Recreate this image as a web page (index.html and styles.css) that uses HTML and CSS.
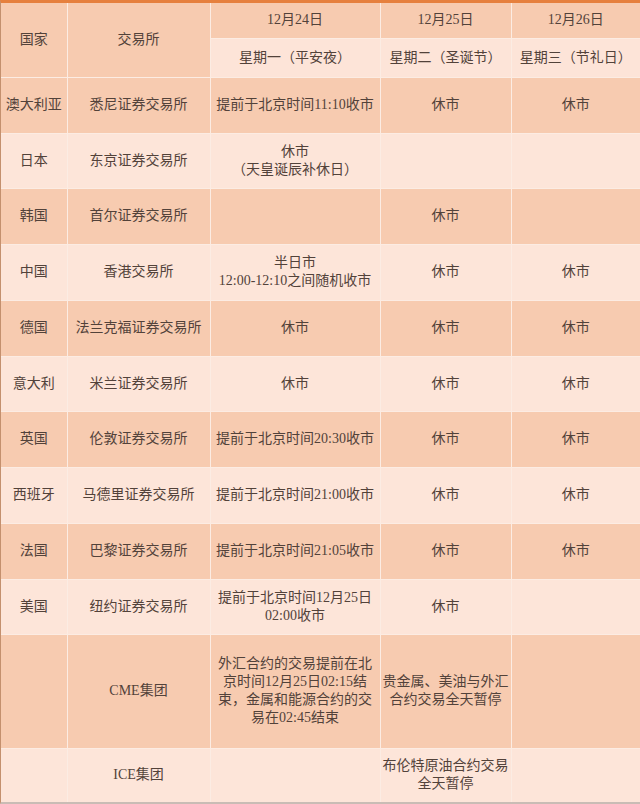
FILE: index.html
```html
<!DOCTYPE html>
<html lang="zh">
<head>
<meta charset="utf-8">
<link rel="stylesheet" href="styles.css">
</head>
<body>
<div class="frame">
<table class="holidays">
  <colgroup>
    <col class="c1"><col class="c2"><col class="c3"><col class="c4"><col class="c5">
  </colgroup>
  <tr class="h1">
    <td rowspan="2" class="dark">国家</td>
    <td rowspan="2" class="dark">交易所</td>
    <td class="dark">12月24日</td>
    <td class="dark">12月25日</td>
    <td class="dark">12月26日</td>
  </tr>
  <tr class="h2">
    <td>星期一（平安夜）</td>
    <td>星期二（圣诞节）</td>
    <td>星期三（节礼日）</td>
  </tr>
  <tr class="r dark r56">
    <td>澳大利亚</td><td>悉尼证券交易所</td><td>提前于北京时间11:10收市</td><td>休市</td><td>休市</td>
  </tr>
  <tr class="r light r55">
    <td>日本</td><td>东京证券交易所</td><td>休市<br>（天皇诞辰补休日）</td><td></td><td></td>
  </tr>
  <tr class="r dark r56">
    <td>韩国</td><td>首尔证券交易所</td><td></td><td>休市</td><td></td>
  </tr>
  <tr class="r light r56">
    <td>中国</td><td>香港交易所</td><td>半日市<br>12:00-12:10之间随机收市</td><td>休市</td><td>休市</td>
  </tr>
  <tr class="r dark r56">
    <td>德国</td><td>法兰克福证券交易所</td><td>休市</td><td>休市</td><td>休市</td>
  </tr>
  <tr class="r light r55">
    <td>意大利</td><td>米兰证券交易所</td><td>休市</td><td>休市</td><td>休市</td>
  </tr>
  <tr class="r dark r56">
    <td>英国</td><td>伦敦证券交易所</td><td>提前于北京时间20:30收市</td><td>休市</td><td>休市</td>
  </tr>
  <tr class="r light r56">
    <td>西班牙</td><td>马德里证券交易所</td><td>提前于北京时间21:00收市</td><td>休市</td><td>休市</td>
  </tr>
  <tr class="r dark r56">
    <td>法国</td><td>巴黎证券交易所</td><td>提前于北京时间21:05收市</td><td>休市</td><td>休市</td>
  </tr>
  <tr class="r light r55">
    <td>美国</td><td>纽约证券交易所</td><td>提前于北京时间12月25日<br>02:00收市</td><td>休市</td><td></td>
  </tr>
  <tr class="r dark r114">
    <td></td><td>CME集团</td><td>外汇合约的交易提前在北<br>京时间12月25日02:15结<br>束，金属和能源合约的交<br>易在02:45结束</td><td>贵金属、美油与外汇<br>合约交易全天暂停</td><td></td>
  </tr>
  <tr class="r light r54">
    <td></td><td>ICE集团</td><td></td><td>布伦特原油合约交易<br>全天暂停</td><td></td>
  </tr>
</table>
</div>
</body>
</html>
```

FILE: styles.css
```css
html, body {
  margin: 0;
  padding: 0;
  background: #fde5d9;
}

.frame {
  width: 640px;
  height: 804px;
  overflow: hidden;
  border-top: 3px solid #e6803e;
  box-sizing: border-box;
  border-left: 1px solid #c4906e;
  border-bottom: 2px solid #c9bcb5;
  background: #fde5d9;
}

.holidays {
  border-collapse: collapse;
  table-layout: fixed;
  width: 639px;
  font-family: "Liberation Serif", "Noto Sans CJK SC", serif;
  font-size: 14px;
  line-height: 18px;
  color: #52423a;
}

.c1 { width: 66px; }
.c2 { width: 143px; }
.c3 { width: 170px; }
.c4 { width: 131px; }
.c5 { width: 129px; }

.holidays td {
  border: 1px solid #fcece3;
  padding: 0 2px;
  text-align: center;
  vertical-align: middle;
  white-space: nowrap;
}

.holidays tr:first-child td { border-top: none; }
.holidays td:first-child { border-left: none; }
.holidays td:last-child { border-right: none; }

.dark, .dark td { background: #f7cbb0; }
.light, .light td { background: #fde5d9; }

.h1 td.dark { background: #f7cbb0; }
.h1 { height: 35px; }
.h2 { height: 39px; }
.h2 td { background: #fde4d8; }

.r56 { height: 56px; }
.r55 { height: 55px; }
.r54 { height: 54px; }
.r114 { height: 114px; }
```
